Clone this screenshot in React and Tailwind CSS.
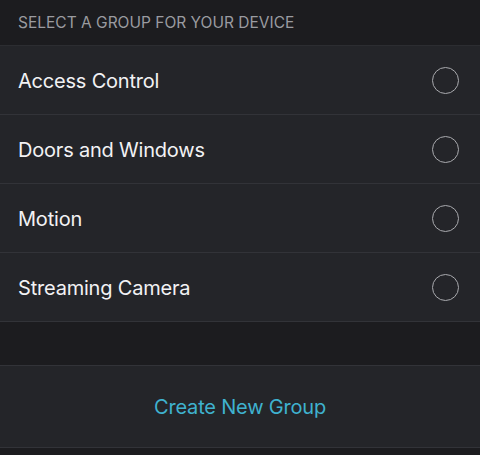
import React from 'react';

const groups = ['Access Control', 'Doors and Windows', 'Motion', 'Streaming Camera'];

const GroupRow = ({ label }) => (
    <div className="h-[69px] flex items-center justify-between pl-[18px] pr-[21px] bg-[#242529] border-b border-[#323338]">
        <span className="text-[20px] text-[#f2f2f4] tracking-[-0.2px] pt-[2px]">{label}</span>
        <span className="w-[27px] h-[27px] rounded-full border-[1.5px] border-[#a9aaae]" />
    </div>
);

export default function App() {
    return (
        <div className="w-[480px] h-[455px] bg-[#1c1c1f] overflow-hidden" style={{ fontFamily: 'Inter, "Noto Sans", sans-serif' }}>
            <div className="h-[46px] flex items-center pl-[18px] border-b border-[#2c2d31]">
                <span className="text-[15.5px] text-[#9a9ba0] uppercase">Select a group for your device</span>
            </div>
            {groups.map(g => <GroupRow key={g} label={g} />)}
            <div className="h-[43px]" />
            <div className="h-[83px] flex items-center justify-center bg-[#242529] border-y border-[#323338]">
                <span className="text-[20px] text-[#3fb2cf] tracking-[-0.2px]">Create New Group</span>
            </div>
        </div>
    );
}
